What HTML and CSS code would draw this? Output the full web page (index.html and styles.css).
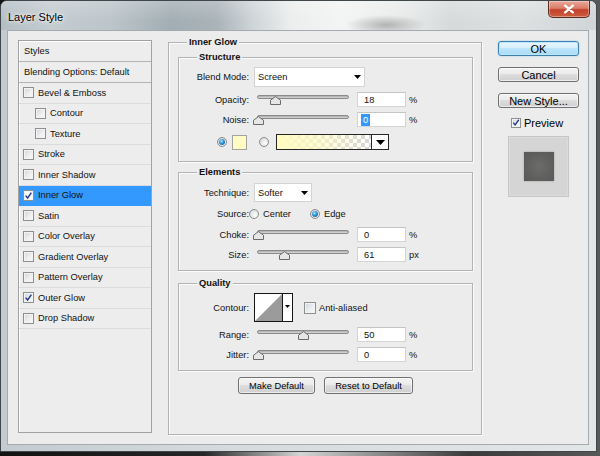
FILE: index.html
```html
<!DOCTYPE html>
<html lang="en">
<head>
<meta charset="utf-8">
<title>Layer Style</title>
<link rel="stylesheet" href="styles.css">
</head>
<body>
<div class="window">
  <div class="titlebar">
    <span class="title">Layer Style</span>
    <div class="close"><svg width="12" height="10" viewBox="0 0 12 10"><path d="M2.2 1.6 L9.8 8.4 M9.8 1.6 L2.2 8.4" stroke="#fff" stroke-width="2.3" stroke-linecap="round"/></svg></div>
  </div>
  <div class="client">
    <div class="styles-list">
      <div class="item head">Styles</div>
      <div class="item head">Blending Options: Default</div>
      <div class="item"><span class="cb"></span>Bevel &amp; Emboss</div>
      <div class="item sub"><span class="cb"></span>Contour</div>
      <div class="item sub"><span class="cb"></span>Texture</div>
      <div class="item"><span class="cb"></span>Stroke</div>
      <div class="item"><span class="cb"></span>Inner Shadow</div>
      <div class="item selected"><span class="cb"><svg width="9" height="9" viewBox="0 0 9 9"><path d="M1.6 4.6 L3.6 7 L7.4 1.6" stroke="#1f3b8c" stroke-width="1.4" fill="none"/></svg></span>Inner Glow</div>
      <div class="item"><span class="cb"></span>Satin</div>
      <div class="item"><span class="cb"></span>Color Overlay</div>
      <div class="item"><span class="cb"></span>Gradient Overlay</div>
      <div class="item"><span class="cb"></span>Pattern Overlay</div>
      <div class="item"><span class="cb"><svg width="9" height="9" viewBox="0 0 9 9"><path d="M1.6 4.6 L3.6 7 L7.4 1.6" stroke="#1f3b8c" stroke-width="1.4" fill="none"/></svg></span>Outer Glow</div>
      <div class="item"><span class="cb"></span>Drop Shadow</div>
    </div>

    <div class="main">
      <div class="group outer">
        <div class="group-title">Inner Glow</div>

        <div class="group structure">
          <div class="group-title">Structure</div>
          <div class="row blend">
            <span class="lbl">Blend Mode:</span>
            <div class="select sel-blend"><span>Screen</span><svg class="arrow" width="7" height="4" viewBox="0 0 7 4"><path d="M0 0 H7 L3.5 4 Z" fill="#000"/></svg></div>
          </div>
          <div class="row">
            <span class="lbl">Opacity:</span>
            <div class="slider"><div class="track"></div><svg class="thumb" style="left:13px" width="11" height="9" viewBox="0 0 11 9"><path d="M0.5 8.5 V4.2 L5.5 0.6 L10.5 4.2 V8.5 Z" fill="#e6e6e6" stroke="#6a6a6a"/></svg></div>
            <div class="num">18</div><span class="unit">%</span>
          </div>
          <div class="row">
            <span class="lbl">Noise:</span>
            <div class="slider"><div class="track"></div><svg class="thumb" style="left:-4px" width="11" height="9" viewBox="0 0 11 9"><path d="M0.5 8.5 V4.2 L5.5 0.6 L10.5 4.2 V8.5 Z" fill="#e6e6e6" stroke="#6a6a6a"/></svg></div>
            <div class="num"><span class="seltext">0</span></div><span class="unit">%</span>
          </div>
          <div class="row color">
            <span class="radio on first"></span>
            <span class="swatch"></span>
            <span class="radio second"></span>
            <div class="gradpick">
              <div class="grad"></div>
              <div class="gradarrow"><svg width="9" height="5" viewBox="0 0 9 5"><path d="M0 0 H9 L4.5 5 Z" fill="#000"/></svg></div>
            </div>
          </div>
        </div>

        <div class="group elements">
          <div class="group-title">Elements</div>
          <div class="row tech">
            <span class="lbl">Technique:</span>
            <div class="select sel-tech"><span>Softer</span><svg class="arrow" width="7" height="4" viewBox="0 0 7 4"><path d="M0 0 H7 L3.5 4 Z" fill="#000"/></svg></div>
          </div>
          <div class="row src">
            <span class="lbl">Source:</span>
            <span class="opt"><span class="radio"></span><span class="opt-text">Center</span></span>
            <span class="opt"><span class="radio on"></span><span class="opt-text">Edge</span></span>
          </div>
          <div class="row">
            <span class="lbl">Choke:</span>
            <div class="slider"><div class="track"></div><svg class="thumb" style="left:-4px" width="11" height="9" viewBox="0 0 11 9"><path d="M0.5 8.5 V4.2 L5.5 0.6 L10.5 4.2 V8.5 Z" fill="#e6e6e6" stroke="#6a6a6a"/></svg></div>
            <div class="num">0</div><span class="unit">%</span>
          </div>
          <div class="row">
            <span class="lbl">Size:</span>
            <div class="slider"><div class="track"></div><svg class="thumb" style="left:22px" width="11" height="9" viewBox="0 0 11 9"><path d="M0.5 8.5 V4.2 L5.5 0.6 L10.5 4.2 V8.5 Z" fill="#e6e6e6" stroke="#6a6a6a"/></svg></div>
            <div class="num">61</div><span class="unit">px</span>
          </div>
        </div>

        <div class="group quality">
          <div class="group-title">Quality</div>
          <div class="row contour-row">
            <span class="lbl">Contour:</span>
            <div class="contour">
              <svg class="curve" width="27" height="27" viewBox="0 0 27 27"><polygon points="0,27 27,0 27,27" fill="#9b9b9b"/></svg>
              <div class="contour-arrow"><svg width="5" height="3" viewBox="0 0 5 3"><path d="M0 0 H5 L2.5 3 Z" fill="#000"/></svg></div>
            </div>
            <span class="cb aa"></span><span class="aa-text">Anti-aliased</span>
          </div>
          <div class="row">
            <span class="lbl">Range:</span>
            <div class="slider"><div class="track"></div><svg class="thumb" style="left:41px" width="11" height="9" viewBox="0 0 11 9"><path d="M0.5 8.5 V4.2 L5.5 0.6 L10.5 4.2 V8.5 Z" fill="#e6e6e6" stroke="#6a6a6a"/></svg></div>
            <div class="num">50</div><span class="unit">%</span>
          </div>
          <div class="row">
            <span class="lbl">Jitter:</span>
            <div class="slider"><div class="track"></div><svg class="thumb" style="left:-4px" width="11" height="9" viewBox="0 0 11 9"><path d="M0.5 8.5 V4.2 L5.5 0.6 L10.5 4.2 V8.5 Z" fill="#e6e6e6" stroke="#6a6a6a"/></svg></div>
            <div class="num">0</div><span class="unit">%</span>
          </div>
        </div>

        <div class="actions">
          <div class="btn small make">Make Default</div>
          <div class="btn small reset">Reset to Default</div>
        </div>
      </div>
    </div>

    <div class="side">
      <div class="btn big default">OK</div>
      <div class="btn big">Cancel</div>
      <div class="btn big">New Style...</div>
      <div class="preview-check"><span class="cb pv"><svg width="9" height="9" viewBox="0 0 9 9"><path d="M1.4 4.6 L3.5 7.2 L7.6 1.4" stroke="#1f3b8c" stroke-width="1.5" fill="none"/></svg></span>Preview</div>
      <div class="preview-box"><div class="preview-swatch"></div></div>
    </div>
  </div>
</div>
</body>
</html>
```

FILE: styles.css
```css
* { box-sizing: border-box; }
html, body { margin: 0; padding: 0; }

body {
  width: 600px;
  height: 456px;
  overflow: hidden;
  background: linear-gradient(90deg, #121212 0%, #262626 34%, #d4d4d4 50%, #a8a8a8 58%, #3a3a3a 78%, #585858 100%);
  font-family: "Liberation Sans", Arial, sans-serif;
  font-size: 9.3px;
  color: #111;
}

.window {
  width: 597px;
  height: 452px;
  border: 1px solid #40474b;
  border-radius: 7px 7px 0 0;
  padding: 0 7px 6px 6px;
  background: linear-gradient(90deg, #c3cbd0 0%, #d6dbde 40%, #e3e6e7 100%);
  display: flex;
  flex-direction: column;
  overflow: hidden;
}

.titlebar {
  height: 29px;
  flex: none;
  margin: 0 -7px 0 -6px;
  padding-left: 7px;
  display: flex;
  justify-content: space-between;
  align-items: flex-start;
  background:
    radial-gradient(ellipse 40px 10px at 385px 24px, rgba(70, 70, 70, .35), rgba(70, 70, 70, 0)),
    linear-gradient(180deg, rgba(255, 255, 255, .2), rgba(255, 255, 255, 0) 70%),
    linear-gradient(90deg, #b3bec4 0px, #c4ccd0 50px, #bcc5ca 110px, #a2aeb4 170px, #a9b3b8 215px, #cdd3d6 250px, #eceeee 290px, #f3f4f4 340px, #e9ebeb 400px, #d7dadb 450px, #dde0e1 520px, #cfd4d6 600px);
}

.title {
  margin-top: 10px;
  font-size: 11px;
  line-height: 13px;
  color: #000;
  text-shadow: 0 0 6px #fff, 0 0 3px #fff;
}

.close {
  width: 42px;
  height: 17px;
  margin-right: 6px;
  border: 1px solid #5b2b22;
  border-top: none;
  border-radius: 0 0 5px 5px;
  background: linear-gradient(#eaa899 0%, #da7f6b 45%, #c3412a 55%, #cc5e40 100%);
  box-shadow: inset 0 0 0 1px rgba(255, 255, 255, .35);
  display: flex;
  align-items: center;
  justify-content: center;
}

.client {
  flex: 1;
  border: 1px solid #a3abb0;
  background: #ececec;
  display: flex;
  align-items: flex-start;
  gap: 16px;
  padding: 9px 9px 0 10px;
}

/* Styles list */
.styles-list {
  width: 134px;
  height: 393px;
  flex: none;
  border: 1px solid #a2a2a2;
  background: #ededed;
  box-shadow: inset 1px 1px 0 #fff;
}

.item {
  display: flex;
  align-items: center;
  height: 20.5px;
  padding-left: 4px;
  border-bottom: 1px solid #dcdcdc;
  white-space: nowrap;
}

.item.head {
  height: 21px;
  padding-left: 5px;
  border-bottom-color: #b4b4b4;
}

.item.sub { padding-left: 16px; }

.item.selected {
  background: #3399ff;
  border-bottom-color: #3399ff;
}

.cb {
  width: 11px;
  height: 11px;
  flex: none;
  margin-right: 4px;
  border: 1px solid #8e8f8f;
  background: linear-gradient(135deg, #d0d3d7 0%, #eceef0 55%, #fafafa 100%);
  box-shadow: inset 0 0 0 1px #f3f3f3;
  display: flex;
  align-items: center;
  justify-content: center;
}

.item.selected .cb { background: #fbfbfb; }

/* Main panel */
.main {
  width: 314px;
  flex: none;
  margin-top: 2px;
}

.group {
  border: 1px solid #b3b3b3;
  box-shadow: inset 1px 1px 0 #fbfbfb, 1px 1px 0 #fbfbfb;
}

.outer {
  height: 393px;
  padding: 0 8px 0 9px;
}

.group-title {
  width: max-content;
  height: 13px;
  line-height: 13px;
  margin: -7px 0 0 18px;
  padding: 0 2px;
  background: #ececec;
  font-weight: bold;
  color: #111;
}

.outer > .group-title { margin-left: 9px; }

.structure { margin-top: 8px; padding-bottom: 11px; }
.elements { margin-top: 10px; padding-bottom: 8px; }
.quality { margin-top: 12px; padding-bottom: 8px; }

.row {
  display: flex;
  align-items: center;
  height: 15px;
  margin-top: 5px;
  white-space: nowrap;
}

.row.blend { height: 20px; margin-top: 3px; }
.row.color { height: 16px; margin-top: 7px; }
.row.tech { height: 19px; margin-top: 4px; }
.row.src { height: 16px; margin-top: 4px; }
.row.contour-row { height: 29px; margin-top: 3px; }

.lbl {
  width: 70px;
  flex: none;
  text-align: right;
}

.select {
  height: 100%;
  margin-left: 5px;
  padding: 0 3px 0 3px;
  background: #fff;
  border: 1px solid #d3d3d3;
  display: flex;
  align-items: center;
  justify-content: space-between;
}

.sel-blend { width: 111px; }
.sel-tech { width: 58px; }

.slider {
  position: relative;
  width: 92px;
  height: 15px;
  flex: none;
  margin-left: 8px;
}

.track {
  margin-top: 3px;
  height: 4px;
  border: 1px solid #8a8a8a;
  border-radius: 2px;
  background: linear-gradient(#ababab, #dadada);
}

.thumb {
  position: absolute;
  top: 4px;
}

.num {
  width: 49px;
  height: 15px;
  flex: none;
  margin-left: 8px;
  padding-left: 6px;
  background: #fff;
  border: 1px solid #d4d4d4;
  border-top-color: #c4c4c4;
  display: flex;
  align-items: center;
}

.seltext {
  display: inline-block;
  line-height: 12px;
  margin-left: -3px;
  padding: 0 2px;
  background: #3399ff;
  color: #fff;
}

.unit { margin-left: 3px; }

.radio {
  width: 10px;
  height: 10px;
  flex: none;
  border-radius: 50%;
  border: 1px solid #8b8b8b;
  background: radial-gradient(circle at 65% 65%, #fdfdfd 0%, #e4e4e4 60%, #c8c8c8 100%);
  display: flex;
  align-items: center;
  justify-content: center;
}

.radio.on::after {
  content: "";
  width: 6px;
  height: 6px;
  border-radius: 50%;
  background: radial-gradient(circle at 40% 35%, #b4e4fc 0%, #2c92d4 45%, #0d4884 100%);
}

.radio.first { margin-left: 38px; }
.radio.second { margin-left: 12px; }

.swatch {
  width: 15px;
  height: 15px;
  flex: none;
  margin-left: 5px;
  background: #fffbc2;
  border: 1px solid #a3a3a3;
}

.gradpick {
  width: 113px;
  height: 16px;
  margin-left: 7px;
  border: 1px solid #262626;
  display: flex;
}

.grad {
  flex: 1;
  background:
    linear-gradient(90deg, #fffbc0 0%, rgba(255, 251, 192, .65) 45%, rgba(255, 251, 192, 0) 100%),
    conic-gradient(#d6d6d6 25%, #ffffff 0 50%, #d6d6d6 0 75%, #ffffff 0) 0 0 / 8px 8px;
}

.gradarrow {
  width: 17px;
  flex: none;
  border-left: 1px solid #262626;
  background: #fff;
  display: flex;
  align-items: center;
  justify-content: center;
}

.opt {
  width: 61px;
  flex: none;
  display: flex;
  align-items: center;
}

.opt:first-of-type { margin-left: 3px; }
.opt-text { margin-left: 4px; }

.contour {
  width: 39px;
  height: 29px;
  flex: none;
  margin-left: 5px;
  border: 1px solid #161616;
  background: #fff;
  display: flex;
}

.curve { flex: none; }

.contour-arrow {
  flex: 1;
  border-left: 1px solid #161616;
  display: flex;
  align-items: center;
  justify-content: center;
  padding-bottom: 2px;
}

.cb.aa {
  width: 12px;
  height: 12px;
  margin-left: 11px;
  margin-right: 3px;
}

.actions {
  display: flex;
  justify-content: center;
  gap: 9px;
  margin-top: 6px;
}

/* Buttons */
.btn {
  border: 1px solid #707070;
  border-radius: 3px;
  background: linear-gradient(#f3f3f3 0%, #ebebeb 45%, #dddddd 50%, #cfcfcf 100%);
  box-shadow: inset 0 0 0 1px rgba(255, 255, 255, .6);
  display: flex;
  align-items: center;
  justify-content: center;
  color: #000;
  white-space: nowrap;
}

.btn.small { height: 17px; }
.btn.make { width: 77px; }
.btn.reset { width: 89px; }

.side {
  width: 81px;
  flex: none;
  display: flex;
  flex-direction: column;
}

.btn.big {
  height: 15px;
  margin-top: 11px;
  font-size: 11px;
}

.btn.big.default {
  margin-top: 1px;
  border-color: #3c7fb1;
  background: linear-gradient(#e9f6fd 0%, #d7effc 45%, #bde5fb 50%, #a8daf6 100%);
  box-shadow: inset 0 0 0 1px #bfe7fb, 0 0 2px #8ccdf2;
}

.preview-check {
  display: flex;
  align-items: center;
  height: 11px;
  margin: 9px 0 0 13px;
  font-size: 11px;
  color: #000;
}

.cb.pv {
  width: 10px;
  height: 10px;
  margin-right: 3px;
}

.preview-box {
  width: 61px;
  height: 61px;
  margin: 8px 0 0 10px;
  background: #d5d5d5;
  border: 1px solid #c6c6c6;
  box-shadow: inset 0 0 0 1px #dcdcdc;
  display: flex;
  align-items: center;
  justify-content: center;
}

.preview-swatch {
  width: 30px;
  height: 29px;
  background: radial-gradient(circle, #6c6c6a 0%, #5f5f5d 60%, #595957 100%);
  box-shadow: 0 0 2px rgba(0, 0, 0, .25);
}
```
